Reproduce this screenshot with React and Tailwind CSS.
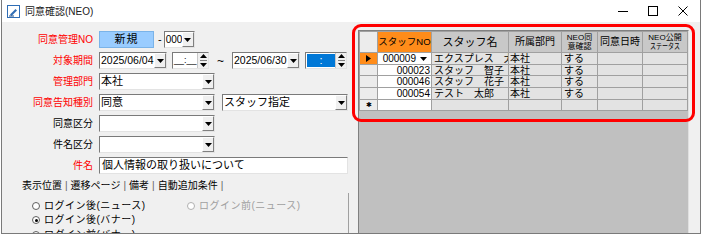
import React from 'react';

const FONT = "font-['Liberation_Sans','Noto_Sans_CJK_JP',sans-serif]";

const DownArrow = () => (
  <svg width="7" height="4" viewBox="0 0 7 4"><path d="M0 0h7L3.5 4z" fill="#000" /></svg>
);

const DropBtn = () => (
  <div className="w-[12px] h-full bg-[#f0f0f0] border border-[#ffffff] border-r-[#808080] border-b-[#808080] flex items-center justify-center shrink-0">
    <DownArrow />
  </div>
);

const Combo = ({ w, text, size = 'text-[11px]' }) => (
  <div className={`flex h-[17px] bg-white border border-[#7a7a7a] border-r-[#e3e3e3] border-b-[#e3e3e3] shrink-0 ${w}`}>
    <div className={`flex-1 pl-[1px] leading-[15px] whitespace-nowrap overflow-hidden ${size}`}>{text}</div>
    <DropBtn />
  </div>
);

const SpinBtn = () => (
  <div className="w-[11px] h-full bg-[#f0f0f0] flex flex-col items-center justify-center gap-[2px] shrink-0 border-l border-[#c8c8c8]">
    <svg width="7" height="4" viewBox="0 0 7 4"><path d="M0 4h7L3.5 0z" fill="#000" /></svg>
    <div className="w-[7px] h-px bg-[#808080]" />
    <svg width="7" height="4" viewBox="0 0 7 4"><path d="M0 0h7L3.5 4z" fill="#000" /></svg>
  </div>
);

const TimeBox = ({ w, selected }) => (
  <div className={`flex h-[17px] bg-white border border-[#7a7a7a] border-r-[#e3e3e3] border-b-[#e3e3e3] shrink-0 ${w}`}>
    <div className="flex-1 flex items-center overflow-hidden">
      {selected ? (
        <div className="ml-[1px] w-[28px] h-[13px] bg-[#0078d7] text-white text-[11px] leading-[13px] text-center">:</div>
      ) : (
        <div className="text-[9px] leading-[15px] pl-[1px]">__:__</div>
      )}
    </div>
    <SpinBtn />
  </div>
);

const Label = ({ children, red }) => (
  <div className={`w-[92px] pr-[1px] text-right text-[10px] leading-[17px] shrink-0 ${red ? 'text-[#ff0000]' : 'text-[#000000]'}`}>
    {children}
  </div>
);

const Row = ({ label, red, children }) => (
  <div className="flex items-center h-[17px] gap-[5px]">
    <Label red={red}>{label}</Label>
    {children}
  </div>
);

const Radio = ({ checked, disabled, label }) => (
  <div className={`flex items-center gap-[4px] h-[14px] text-[10px] leading-[14px] ${disabled ? 'text-[#a0a0a0]' : 'text-black'}`}>
    <div className={`w-[8px] h-[8px] rounded-full border ${disabled ? 'border-[#b0b0b0]' : 'border-[#606060]'} bg-white flex items-center justify-center`}>
      {checked && <div className="w-[3px] h-[3px] rounded-full bg-black" />}
    </div>
    <span className="tracking-[0.5px]">{label}</span>
  </div>
);

const rows = [
  { no: '000009', name: 'エクスプレス　太', dept: '本社', ok: 'する', current: true },
  { no: '000023', name: 'スタッフ　智子', dept: '本社', ok: 'する' },
  { no: '000046', name: 'スタッフ　花子', dept: '本社', ok: 'する' },
  { no: '000054', name: 'テスト　太郎', dept: '本社', ok: 'する' },
];

const cell = 'border-r border-b border-[#a0a0a0] overflow-hidden whitespace-nowrap';

const Grid = () => (
  <div className="grid grid-cols-[18px_54px_77px_53px_36px_45px_45px] grid-rows-[21px_12px_11px_12px_12px_11px] w-fit border-t border-l border-[#a0a0a0] bg-[#f0f0f0]">
    <div className={`${cell} bg-[#ececec]`} />
    <div className={`${cell} bg-[#ff8c1a] text-[9.5px] leading-[20px] text-center`}>スタッフNO</div>
    <div className={`${cell} bg-[#c8c8c8] text-[11px] leading-[20px] text-center`}>スタッフ名</div>
    <div className={`${cell} bg-[#c8c8c8] text-[10px] leading-[20px] text-center`}>所属部門</div>
    <div className={`${cell} bg-[#c8c8c8] text-[8px] leading-[9px] text-center pt-px`}>NEO同<br />意確認</div>
    <div className={`${cell} bg-[#c8c8c8] text-[10px] leading-[20px] text-center`}>同意日時</div>
    <div className={`${cell} bg-[#c8c8c8] text-[8px] leading-[9px] text-center pt-px`}>NEO公開<br /><span className="inline-block scale-x-75">ステータス</span></div>
    {rows.map((r) => (
      <React.Fragment key={r.no}>
        <div className={`${cell} ${r.current ? 'bg-[#ff8c1a]' : 'bg-[#ececec]'} flex items-center justify-center`}>
          {r.current && <svg width="5" height="7" viewBox="0 0 5 7"><path d="M0 0L5 3.5L0 7z" fill="#000" /></svg>}
        </div>
        <div className={`${cell} bg-white flex items-center justify-end text-[10px] leading-[11px]`}>
          <span className="pr-[1px]">{r.no}</span>
          {r.current && (
            <div className="w-[12px] h-full flex items-center justify-center bg-white mr-[2px]"><DownArrow /></div>
          )}
        </div>
        <div className={`${cell} bg-[#e3e3e3] text-[10px] leading-[11px] pl-[2px]`}>{r.name}</div>
        <div className={`${cell} bg-[#e3e3e3] text-[10px] leading-[11px] pl-[1px]`}>{r.dept}</div>
        <div className={`${cell} bg-[#e3e3e3] text-[10px] leading-[11px] pl-[2px]`}>{r.ok}</div>
        <div className={`${cell} bg-[#e3e3e3]`} />
        <div className={`${cell} bg-[#e3e3e3]`} />
      </React.Fragment>
    ))}
    <div className={`${cell} bg-[#ececec] flex items-center justify-center text-[7px] leading-[8px]`}>✱</div>
    <div className={`${cell} bg-white`} />
    <div className={`${cell} bg-[#e3e3e3]`} />
    <div className={`${cell} bg-[#e3e3e3]`} />
    <div className={`${cell} bg-[#e3e3e3]`} />
    <div className={`${cell} bg-[#e3e3e3]`} />
    <div className={`${cell} bg-[#e3e3e3]`} />
  </div>
);

export default function App() {
  return (
    <div className={`w-[702px] h-[235px] bg-white overflow-hidden ${FONT}`}>
      <div className="relative ml-[1px] w-[700px] h-[234px] border border-t-0 border-[#7a7a7a] bg-[#f0f0f0] flex flex-col overflow-hidden">
        {/* title bar */}
        <div className="h-[22px] bg-white flex items-center shrink-0">
          <svg width="13" height="13" viewBox="0 0 13 13" className="ml-[5px]">
            <rect x="0.5" y="0.5" width="12" height="12" fill="#fff" stroke="#2f6db5" />
            <path d="M3 9.5 L8.5 4 L10 5.5 L4.5 11 Z" fill="#2f6db5" />
            <path d="M2 11h5" stroke="#1c4f8c" strokeWidth="1" />
          </svg>
          <span className="ml-[5px] text-[10px] text-[#202020]">同意確認(NEO)</span>
          <div className="ml-auto flex items-center">
            <div className="w-[30px] flex justify-center">
              <svg width="10" height="10" viewBox="0 0 10 10"><path d="M0 5.5h10" stroke="#000" /></svg>
            </div>
            <div className="w-[30px] flex justify-center">
              <svg width="10" height="10" viewBox="0 0 10 10"><rect x="0.5" y="0.5" width="9" height="9" fill="none" stroke="#000" /></svg>
            </div>
            <div className="w-[30px] flex justify-center mr-[2px]">
              <svg width="10" height="10" viewBox="0 0 10 10"><path d="M0.5 0.5l9 9M9.5 0.5l-9 9" stroke="#000" /></svg>
            </div>
          </div>
        </div>

        <div className="flex flex-1 min-h-0">
          {/* left form */}
          <div className="w-[350px] shrink-0 pt-[9px] flex flex-col">
            <div className="flex flex-col gap-[4px]">
              <Row label="同意管理NO" red>
                <div className="w-[55px] h-[17px] bg-[#99ccff] border border-[#7ab3e8] text-[11px] leading-[15px] text-center tracking-[1px]">新規</div>
                <span className="text-[11px] -ml-[1px]">-</span>
                <Combo w="w-[31px] -ml-[3px]" text="000" size="text-[10px]" />
              </Row>
              <Row label="対象期間" red>
                <Combo w="w-[68px]" text="2025/06/04" size="text-[10.5px]" />
                <TimeBox w="w-[37px]" />
                <span className="text-[12px] mx-[3px]">~</span>
                <Combo w="w-[68px]" text="2025/06/30" size="text-[10.5px]" />
                <TimeBox w="w-[42px]" selected />
              </Row>
              <Row label="管理部門" red>
                <Combo w="w-[116px]" text="本社" />
              </Row>
              <Row label="同意告知種別" red>
                <Combo w="w-[116px]" text="同意" />
                <Combo w="w-[126px] ml-[2px]" text="スタッフ指定" />
              </Row>
              <Row label="同意区分">
                <Combo w="w-[116px]" text="" />
              </Row>
              <Row label="件名区分">
                <Combo w="w-[116px]" text="" />
              </Row>
              <Row label="件名" red>
                <div className="w-[249px] h-[17px] bg-white border border-[#7a7a7a] border-r-[#e3e3e3] border-b-[#e3e3e3] text-[11px] leading-[15px] pl-[2px]">個人情報の取り扱いについて</div>
              </Row>
            </div>

            {/* tabs */}
            <div className="mt-[5px] ml-[17px] h-[14px] flex items-center text-[10px] leading-[14px]">
              <span className="pl-[3px] pr-[2px]">表示位置</span>
              <span className="text-[#606060] px-[1px]">|</span>
              <span className="px-[2px]">遷移ページ</span>
              <span className="text-[#606060] px-[1px]">|</span>
              <span className="px-[2px]">備考</span>
              <span className="text-[#606060] px-[1px]">|</span>
              <span className="px-[2px]">自動追加条件</span>
              <span className="text-[#606060] px-[1px]">|</span>
            </div>
            <div className="ml-[17px] w-[330px] flex-1 border-r border-[#a0a0a0] pt-[6px] pl-[13px] flex flex-col">
              <div className="flex">
                <div className="w-[155px]"><Radio label="ログイン後(ニュース)" /></div>
                <Radio label="ログイン前(ニュース)" disabled />
              </div>
              <Radio label="ログイン後(バナー)" checked />
              <div className="mt-[1px]"><Radio label="ログイン前(バナー)" /></div>
            </div>
          </div>

          {/* right grid panel */}
          <div className="flex-1 pt-[8px] pl-[6px] pr-[11px]">
            <div className="h-full bg-[#c0c0c0] border-l border-t border-[#808080] border-r border-r-[#e0e0e0]">
              <Grid />
            </div>
          </div>
        </div>

        {/* red highlight overlay */}
        <div className="absolute left-[350px] top-[24px] w-[343px] h-[98px] border-[3px] border-[#ff0000] rounded-[9px] pointer-events-none" />
      </div>
    </div>
  );
}
